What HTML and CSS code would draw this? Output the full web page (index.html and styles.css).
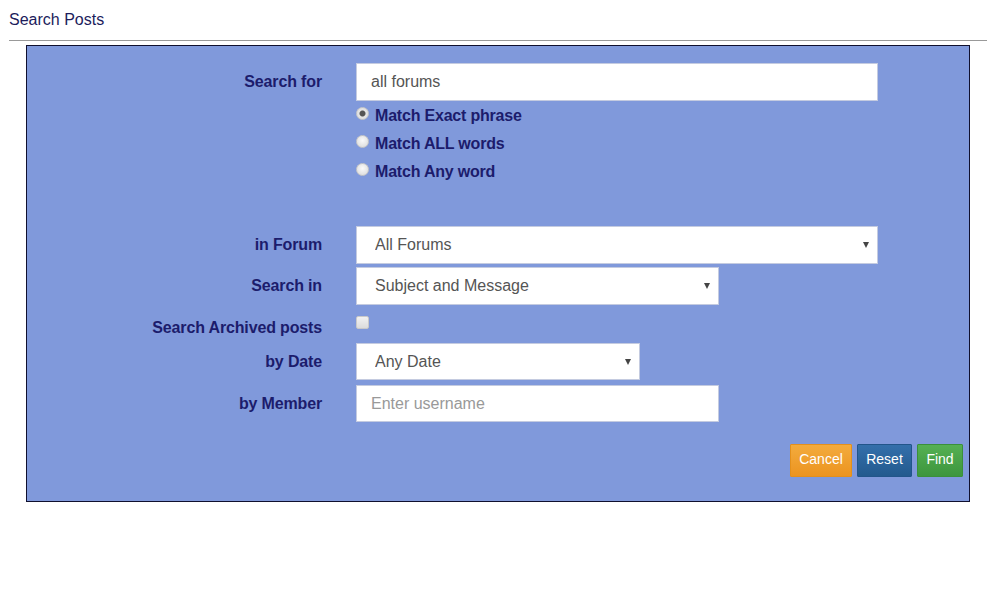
FILE: index.html
```html
<!DOCTYPE html>
<html>
<head>
<meta charset="utf-8">
<link rel="stylesheet" href="styles.css">
</head>
<body>
<div class="page">
  <h1 class="title">Search Posts</h1>
  <hr class="rule">
  <form class="search-box">
    <div class="row row-text">
      <label class="lbl">Search for</label>
      <input class="field field-wide" type="text" value="all forums">
    </div>
    <div class="row row-radios">
      <span></span>
      <div class="radios">
        <label class="radio-line"><input type="radio" name="m" checked> Match Exact phrase</label>
        <label class="radio-line"><input type="radio" name="m"> Match ALL words</label>
        <label class="radio-line"><input type="radio" name="m"> Match Any word</label>
      </div>
    </div>
    <div class="row row-forum">
      <label class="lbl">in Forum</label>
      <div class="select-wrap sel-wide"><select class="sel"><option>All Forums</option></select></div>
    </div>
    <div class="row row-in">
      <label class="lbl">Search in</label>
      <div class="select-wrap sel-mid"><select class="sel"><option>Subject and Message</option></select></div>
    </div>
    <div class="row row-archived">
      <label class="lbl lbl-arch">Search Archived posts</label>
      <div><input class="check" type="checkbox"></div>
    </div>
    <div class="row row-date">
      <label class="lbl">by Date</label>
      <div class="select-wrap sel-small"><select class="sel"><option>Any Date</option></select></div>
    </div>
    <div class="row row-member">
      <label class="lbl">by Member</label>
      <input class="field field-mid" type="text" placeholder="Enter username">
    </div>
    <div class="buttons">
      <button type="button" class="btn btn-cancel">Cancel</button>
      <button type="button" class="btn btn-reset">Reset</button>
      <button type="button" class="btn btn-find">Find</button>
    </div>
  </form>
</div>
</body>
</html>
```
FILE: styles.css
```css
* { box-sizing: border-box; }
html, body { margin: 0; padding: 0; background: #fff; }
body { font-family: "Liberation Sans", Arial, sans-serif; }
.page { padding: 0 0 0 9px; width: 987px; }
.title {
  margin: 0;
  padding-top: 10px;
  font-size: 16px;
  line-height: 20px;
  font-weight: normal;
  color: #1c1c5c;
}
.rule {
  margin: 10px 0 0 0;
  border: 0;
  border-top: 1px solid #999;
  height: 0;
  width: 978px;
}
.search-box {
  margin: 4px 0 0 17px;
  width: 944px;
  background: #8099db;
  border: 1px solid #10102e;
  padding: 17px 6px 24px 0;
}
.row {
  display: grid;
  grid-template-columns: 295px 522px;
  column-gap: 34px;
  align-items: center;
}
.lbl {
  text-align: right;
  font-weight: bold;
  font-size: 16px;
  letter-spacing: -0.15px;
  color: #1c1c6c;
}
.row-text { height: 38px; }
.row-radios { height: 84px; align-items: start; }
.row-forum { height: 38px; margin-top: 41px; }
.row-in { height: 38px; margin-top: 3px; }
.row-archived { height: 38px; align-items: start; }
.row-date { height: 37px; }
.row-member { height: 37px; margin-top: 5px; }
.lbl-arch { margin-top: 14px; line-height: 18px; }
.field {
  height: 100%;
  border: 1px solid #c4cbe0;
  background: #fff;
  font-family: inherit;
  font-size: 16px;
  color: #555;
  padding: 0 14px;
  outline: none;
}
.field::placeholder { color: #999; }
.field-wide { width: 522px; }
.field-mid { width: 363px; }
.radios { display: flex; flex-direction: column; }
.radio-line {
  display: flex;
  align-items: center;
  height: 28px;
  padding-top: 2px;
  font-weight: bold;
  font-size: 16px;
  letter-spacing: -0.2px;
  color: #1c1c6c;
  gap: 6px;
}
.radio-line input {
  appearance: none;
  -webkit-appearance: none;
  margin: -5px 0 0 0;
  width: 13px;
  height: 13px;
  border-radius: 50%;
  border: 1px solid #c8c8c8;
  background: radial-gradient(circle at 50% 40%, #fafafa 0%, #e2e2e2 70%, #d4d4d4 100%);
}
.radio-line input:checked {
  background: radial-gradient(circle, #555 0, #555 2.5px, #e6e6e6 3.5px, #d8d8d8 100%);
}
.select-wrap { position: relative; height: 100%; }
.select-wrap::after {
  content: "";
  position: absolute;
  right: 9px;
  top: 50%;
  margin-top: -3px;
  border-left: 3.5px solid transparent;
  border-right: 3.5px solid transparent;
  border-top: 6px solid #444;
}
.sel {
  appearance: none;
  -webkit-appearance: none;
  width: 100%;
  height: 100%;
  border: 1px solid #c4cbe0;
  border-radius: 0;
  background: #fff;
  font-family: inherit;
  font-size: 16px;
  color: #555;
  padding: 0 0 1px 18px;
  outline: none;
}
.sel-wide { width: 522px; }
.sel-mid { width: 363px; }
.sel-small { width: 284px; }
.check {
  appearance: none;
  -webkit-appearance: none;
  margin: 11px 0 0 0;
  width: 13px;
  height: 13px;
  border: 1px solid #c9c9c9;
  border-radius: 2px;
  background: linear-gradient(#f2f2f2, #dcdcdc);
}
.buttons {
  display: flex;
  justify-content: flex-end;
  gap: 5px;
  margin-top: 22px;
}
.btn {
  height: 33px;
  padding: 0 0 3px 0;
  font-family: inherit;
  font-size: 14px;
  color: #fff;
  border: 1px solid;
  border-radius: 1px;
  cursor: pointer;
}
.btn-cancel {
  width: 62px;
  background: linear-gradient(#f3ab3d, #ec9420);
  border-color: #e3901c;
}
.btn-reset {
  width: 55px;
  background: linear-gradient(#336fab, #235a8e);
  border-color: #22558a;
}
.btn-find {
  width: 46px;
  background: linear-gradient(#55b053, #3d963d);
  border-color: #3a903a;
}
```
